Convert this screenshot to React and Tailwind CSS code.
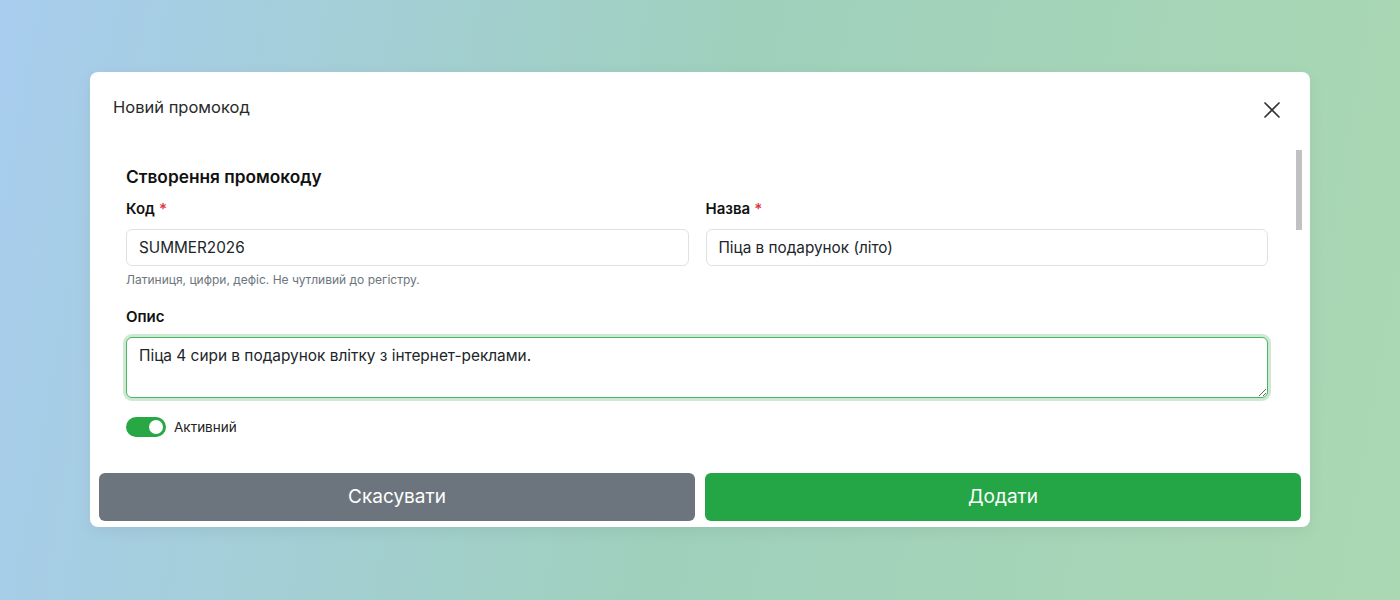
import React from "react";

function Field({ label, required, value, hint }) {
  return (
    <div className="flex flex-col">
      <label className="mt-[9px] text-[15px] leading-[22px] font-semibold text-[#111]">
        {label}
        {required && <span className="ml-[4px] text-[#dc3545]">*</span>}
      </label>
      <input
        readOnly
        value={value}
        className="mt-[9px] h-[37px] rounded-[6px] border border-[#dee2e6] bg-white px-[12px] text-[15.3px] text-[#212529] outline-none"
      />
      {hint && (
        <div className="mt-[6px] text-[12px] leading-[16px] text-[#6c757d]">{hint}</div>
      )}
    </div>
  );
}

export default function App() {
  return (
    <div
      className="flex h-[600px] w-full items-center justify-center bg-linear-[100deg] from-[#a8cdef] via-[#9fd0bc] to-[#aad8b3]"
      style={{ fontFamily: "Inter, 'Noto Sans', sans-serif" }}
    >
      <div className="-mt-[1px] flex h-[455px] w-[1220px] flex-col rounded-[8px] bg-white shadow-[0_4px_16px_rgba(0,0,0,0.06)]">
        {/* header */}
        <div className="flex h-[70px] shrink-0 items-center justify-between pl-[23px] pr-[28px]">
          <h2 className="text-[16.5px] font-normal text-[#2a2a2a]">Новий промокод</h2>
          <button className="mt-[6px] flex h-[20px] w-[20px] items-center justify-center text-[#333]">
            <svg width="18" height="18" viewBox="0 0 18 18" fill="none">
              <path d="M2 2L16 16M16 2L2 16" stroke="currentColor" strokeWidth="1.7" strokeLinecap="round" />
            </svg>
          </button>
        </div>

        {/* scrollable body */}
        <div className="relative h-[323px] shrink-0 overflow-hidden">
          <div className="pl-[36px] pr-[42px] pt-[23px]">
            <h3 className="text-[17.3px] leading-[24px] font-semibold text-[#111]">Створення промокоду</h3>
            <div className="grid grid-cols-2 gap-x-[17px]">
              <Field
                label="Код"
                required
                value="SUMMER2026"
                hint="Латиниця, цифри, дефіс. Не чутливий до регістру."
              />
              <Field label="Назва" required value="Піца в подарунок (літо)" />
            </div>
            <label className="mt-[18px] block text-[15px] leading-[22px] font-semibold text-[#111]">Опис</label>
            <textarea
              readOnly
              value="Піца 4 сири в подарунок влітку з інтернет-реклами."
              className="mt-[9px] block h-[61px] w-full rounded-[6px] border border-[#4cb561] bg-white px-[12px] py-[7px] text-[15.4px] leading-[22px] text-[#212529] shadow-[0_0_0_3px_#cde9d3] outline-none"
            />
            <div className="mt-[19px] flex items-center gap-[8px]">
              <div className="flex h-[20px] w-[40px] items-center justify-end rounded-full bg-[#28a745] px-[3px]">
                <div className="h-[14px] w-[14px] rounded-full bg-white" />
              </div>
              <span className="text-[13.5px] text-[#222]">Активний</span>
            </div>
            <div className="mt-[40px] h-[600px]" />
          </div>
          {/* scrollbar thumb */}
          <div className="absolute right-[8px] top-[8px] h-[80px] w-[6px] bg-[#c1c1c1]" />
        </div>

        {/* footer */}
        <div className="flex shrink-0 gap-[10px] px-[9px] pb-[6px] pt-[8px]">
          <button className="h-[48px] flex-1 rounded-[6px] bg-[#6c757d] text-[19px] text-white">Скасувати</button>
          <button className="h-[48px] flex-1 rounded-[6px] bg-[#24a646] text-[19px] text-white">Додати</button>
        </div>
      </div>
    </div>
  );
}
